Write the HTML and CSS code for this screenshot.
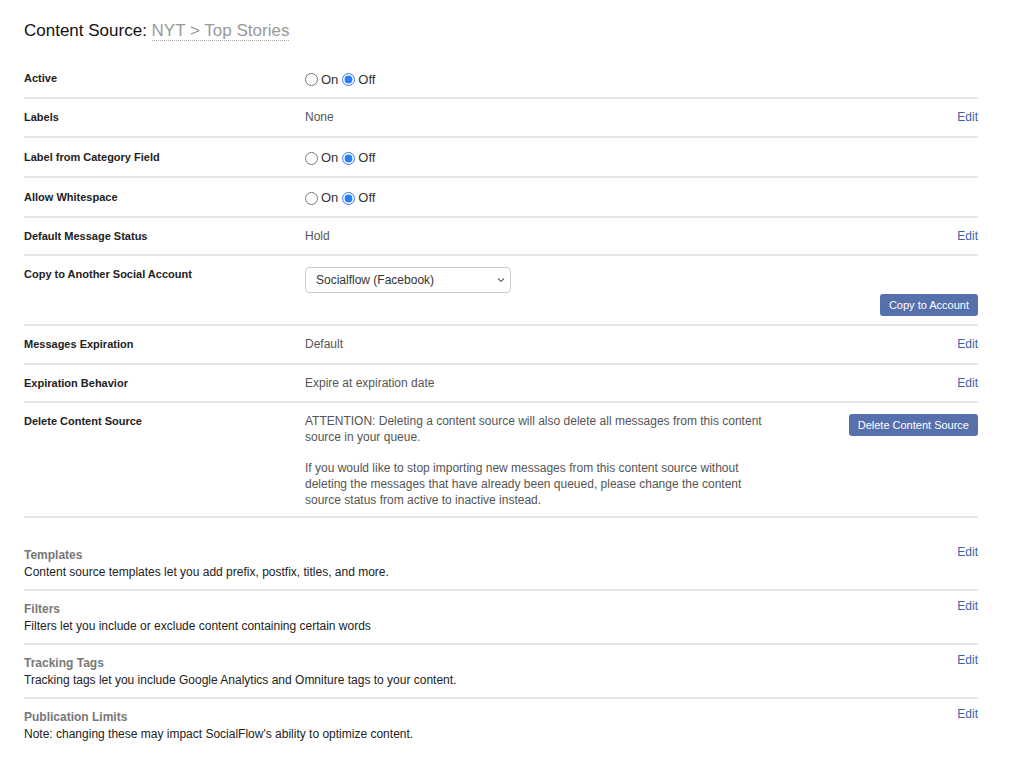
FILE: index.html
```html
<!DOCTYPE html>
<html lang="en">
<head>
    <meta charset="UTF-8">
    <title>Content Source</title>
    <link rel="stylesheet" href="styles.css">
</head>
<body>
    <div class="page">
        <h1 class="title">Content Source: <span class="source-name">NYT &gt; Top Stories</span></h1>

        <div class="settings">
            <div class="row row-radio">
                <div class="label">Active</div>
                <div class="value radios">
                    <label><input type="radio" name="active"> On</label>
                    <label><input type="radio" name="active" checked> Off</label>
                </div>
                <div class="action"></div>
            </div>
            <div class="row">
                <div class="label">Labels</div>
                <div class="value">None</div>
                <div class="action"><a href="#">Edit</a></div>
            </div>
            <div class="row row-radio">
                <div class="label">Label from Category Field</div>
                <div class="value radios">
                    <label><input type="radio" name="category"> On</label>
                    <label><input type="radio" name="category" checked> Off</label>
                </div>
                <div class="action"></div>
            </div>
            <div class="row row-radio">
                <div class="label">Allow Whitespace</div>
                <div class="value radios">
                    <label><input type="radio" name="whitespace"> On</label>
                    <label><input type="radio" name="whitespace" checked> Off</label>
                </div>
                <div class="action"></div>
            </div>
            <div class="row">
                <div class="label">Default Message Status</div>
                <div class="value">Hold</div>
                <div class="action"><a href="#">Edit</a></div>
            </div>
            <div class="row row-copy">
                <div class="label">Copy to Another Social Account</div>
                <div class="value">
                    <div class="select-wrap">
                        <select class="select">
                            <option>Socialflow (Facebook)</option>
                        </select>
                        <svg class="chevron" width="10" height="6" viewBox="0 0 10 6"><path d="M2 1.5l3 3 3-3" fill="none" stroke="#666" stroke-width="1.1"/></svg>
                    </div>
                </div>
                <div class="action action-bottom"><button class="btn">Copy to Account</button></div>
            </div>
            <div class="row">
                <div class="label">Messages Expiration</div>
                <div class="value">Default</div>
                <div class="action"><a href="#">Edit</a></div>
            </div>
            <div class="row">
                <div class="label">Expiration Behavior</div>
                <div class="value">Expire at expiration date</div>
                <div class="action"><a href="#">Edit</a></div>
            </div>
            <div class="row row-delete">
                <div class="label">Delete Content Source</div>
                <div class="value notice">
                    <p>ATTENTION: Deleting a content source will also delete all messages from this content source in your queue.</p>
                    <p>If you would like to stop importing new messages from this content source without deleting the messages that have already been queued, please change the content source status from active to inactive instead.</p>
                </div>
                <div class="action"><button class="btn">Delete Content Source</button></div>
            </div>
        </div>

        <div class="sections">
            <div class="section">
                <div>
                    <div class="section-title">Templates</div>
                    <div class="section-desc">Content source templates let you add prefix, postfix, titles, and more.</div>
                </div>
                <a href="#">Edit</a>
            </div>
            <div class="section">
                <div>
                    <div class="section-title">Filters</div>
                    <div class="section-desc">Filters let you include or exclude content containing certain words</div>
                </div>
                <a href="#">Edit</a>
            </div>
            <div class="section">
                <div>
                    <div class="section-title">Tracking Tags</div>
                    <div class="section-desc">Tracking tags let you include Google Analytics and Omniture tags to your content.</div>
                </div>
                <a href="#">Edit</a>
            </div>
            <div class="section">
                <div>
                    <div class="section-title">Publication Limits</div>
                    <div class="section-desc">Note: changing these may impact SocialFlow's ability to optimize content.</div>
                </div>
                <a href="#">Edit</a>
            </div>
        </div>
    </div>
</body>
</html>
```

FILE: styles.css
```css
body {
    margin: 0;
    font-family: "Liberation Sans", Arial, sans-serif;
    color: #333;
    background: #fff;
}

.page {
    width: 954px;
    padding: 20px 0 0 24px;
}

.title {
    margin: 0 0 17px;
    font-size: 17px;
    font-weight: normal;
    line-height: 22px;
    color: #111;
}

.source-name {
    color: #999;
    border-bottom: 1px dotted #aaa;
}

a {
    color: #3d5fae;
    text-decoration: none;
    font-size: 12px;
}

.row {
    display: grid;
    grid-template-columns: 281px 1fr auto;
    border-bottom: 2px solid #e6e6e6;
    padding: 11px 0 11.5px;
}

.label {
    font-size: 11px;
    font-weight: bold;
    line-height: 14px;
    color: #222;
}

.value {
    font-size: 12px;
    line-height: 14px;
    color: #555;
}

.action {
    display: flex;
    justify-content: flex-end;
    align-items: flex-start;
    line-height: 14px;
}

.row-radio {
    padding: 12px 0 12px;
}

.radios {
    display: flex;
    align-items: center;
    gap: 4px;
    color: #333;
    font-size: 13px;
    margin-top: 1px;
    margin-bottom: -2px;
}

.radios label {
    display: flex;
    align-items: center;
    gap: 3px;
}

.radios input {
    margin: 0;
    width: 13px;
    height: 13px;
    accent-color: #2f7cf6;
}

.row-copy {
    padding-top: 11px;
    padding-bottom: 8px;
}

.select-wrap {
    position: relative;
    width: 206px;
}

.select {
    appearance: none;
    width: 206px;
    height: 26px;
    border: 1px solid #ccc;
    border-radius: 4px;
    background: #fff;
    padding: 0 10px;
    font-family: inherit;
    font-size: 12px;
    color: #333;
}

.chevron {
    position: absolute;
    right: 5px;
    top: 10px;
}

.action-bottom {
    align-items: flex-end;
    padding-top: 27px;
}

.btn {
    background: #5670ab;
    color: #fff;
    border: 0;
    border-radius: 3px;
    height: 22px;
    padding: 0 9px;
    font-family: inherit;
    font-size: 11px;
}

.row-delete {
    padding-bottom: 9px;
}

.notice {
    max-width: 470px;
    line-height: 16px;
    margin-top: -1px;
    margin-bottom: -1px;
}

.notice p {
    margin: 0 0 15px;
}

.notice p:last-child {
    margin-bottom: 0;
}

.sections {
    padding-top: 19px;
}

.section {
    display: flex;
    justify-content: space-between;
    align-items: flex-start;
    padding: 10px 0 8px;
    border-bottom: 2px solid #e6e6e6;
    font-size: 12px;
    line-height: 17px;
}

.section:last-child {
    border-bottom: 0;
}

.section-title {
    font-weight: bold;
    color: #777;
}

.section-desc {
    color: #222;
}

.section a {
    margin-top: -3px;
}
```
